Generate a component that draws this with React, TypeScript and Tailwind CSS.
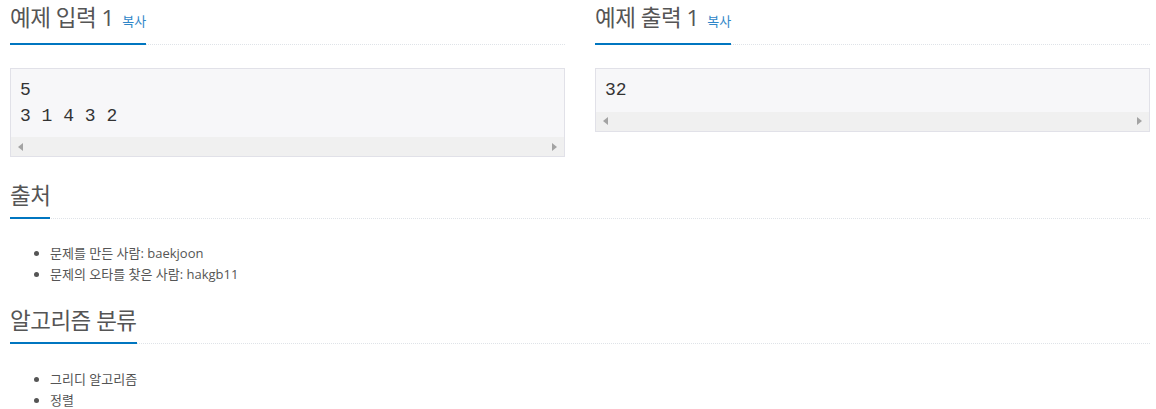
import React from "react";

function Headline({ children }: { children: React.ReactNode }) {
  return (
    <div className="flex border-b border-dotted border-[#dfe3e8]">
      <h2 className="-mb-px border-b-2 border-[#0076C0] pb-[5px] text-[22.5px] leading-[33px] tracking-[-0.5px] text-[#555] font-normal">
        {children}
      </h2>
    </div>
  );
}

function ScrollBar() {
  return (
    <div className="flex h-[19px] items-center justify-between bg-[#f0f0f0] px-[7px]">
      <svg width="5" height="8" viewBox="0 0 5 8">
        <polygon points="5,0 5,8 0,4" fill="#a3a3a3" />
      </svg>
      <svg width="5" height="8" viewBox="0 0 5 8">
        <polygon points="0,0 0,8 5,4" fill="#a3a3a3" />
      </svg>
    </div>
  );
}

function Sample({ title, lines }: { title: string; lines: string[] }) {
  return (
    <div>
      <Headline>
        {title}{" "}
        <span className="ml-[3px] text-[13px] tracking-normal text-[#2f86c8]">복사</span>
      </Headline>
      <div className="mt-[23px] border border-[#e1e1e8] bg-[#f7f7f9]">
        <pre className="px-[9px] pt-[9px] pb-[8px] font-['Liberation_Mono',monospace] text-[18px] leading-[1.42857] text-[#333]">
          {lines.join("\n")}
        </pre>
        <ScrollBar />
      </div>
    </div>
  );
}

export default function App() {
  return (
    <div
      className="min-h-[409px] bg-white pl-[10px] pr-[6px] pt-[1px] text-[13px] leading-[1.6] text-[#555]"
      style={{ fontFamily: '"Open Sans", "Noto Sans CJK KR", sans-serif' }}
    >
      <div className="grid grid-cols-2 gap-x-[30px]">
        <Sample title="예제 입력 1" lines={["5", "3 1 4 3 2"]} />
        <Sample title="예제 출력 1" lines={["32"]} />
      </div>

      <section className="mt-[22px]">
        <Headline>출처</Headline>
        <ul className="mt-[24px] list-disc pl-[40px]">
          <li>문제를 만든 사람: baekjoon</li>
          <li>문제의 오타를 찾은 사람: hakgb11</li>
        </ul>
      </section>

      <section className="mt-[19px]">
        <Headline>알고리즘 분류</Headline>
        <ul className="mt-[25px] list-disc pl-[40px]">
          <li>그리디 알고리즘</li>
          <li>정렬</li>
        </ul>
      </section>
    </div>
  );
}
